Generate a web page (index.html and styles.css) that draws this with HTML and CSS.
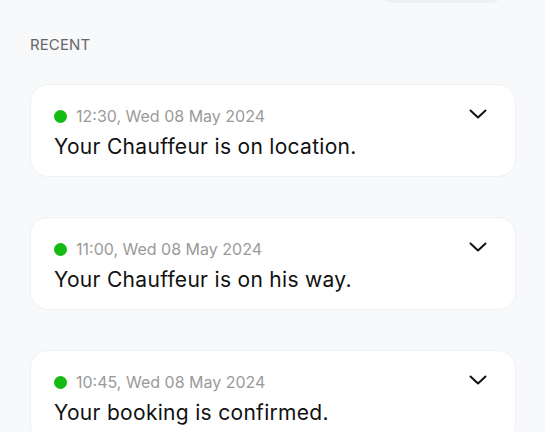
FILE: index.html
```html
<!DOCTYPE html>
<html>
<head>
<meta charset="utf-8">
<link rel="stylesheet" href="styles.css">
</head>
<body>
<div class="topbar"><div class="pill"></div></div>
<main class="panel">
  <h2 class="section-title">RECENT</h2>
  <div class="list">
    <div class="card">
      <div class="card-body">
        <div class="meta"><span class="dot"></span><span class="time">12:30, Wed 08 May 2024</span></div>
        <div class="title">Your Chauffeur is on location.</div>
      </div>
      <svg class="chev" width="18" height="10" viewBox="0 0 18 10"><path d="M1.5 1.5 L9 8.5 L16.5 1.5" fill="none" stroke="#111" stroke-width="2" stroke-linecap="round" stroke-linejoin="round"/></svg>
    </div>
    <div class="card">
      <div class="card-body">
        <div class="meta"><span class="dot"></span><span class="time">11:00, Wed 08 May 2024</span></div>
        <div class="title">Your Chauffeur is on his way.</div>
      </div>
      <svg class="chev" width="18" height="10" viewBox="0 0 18 10"><path d="M1.5 1.5 L9 8.5 L16.5 1.5" fill="none" stroke="#111" stroke-width="2" stroke-linecap="round" stroke-linejoin="round"/></svg>
    </div>
    <div class="card">
      <div class="card-body">
        <div class="meta"><span class="dot"></span><span class="time">10:45, Wed 08 May 2024</span></div>
        <div class="title">Your booking is confirmed.</div>
      </div>
      <svg class="chev" width="18" height="10" viewBox="0 0 18 10"><path d="M1.5 1.5 L9 8.5 L16.5 1.5" fill="none" stroke="#111" stroke-width="2" stroke-linecap="round" stroke-linejoin="round"/></svg>
    </div>
  </div>
</main>
</body>
</html>
```
FILE: styles.css
```css
* { box-sizing: border-box; }
html, body { margin: 0; padding: 0; }
body {
  background: #f8f9fb;
  font-family: Inter, "Open Sans", sans-serif;
  width: 545px;
  height: 432px;
  overflow: hidden;
}
.topbar {
  height: 0;
  position: relative;
}
.pill {
  position: absolute;
  left: 378px;
  top: -30px;
  width: 128px;
  height: 33px;
  border-radius: 16px;
  background: #eef0f3;
}
.panel {
  padding: 35px 29px 0 30px;
}
.section-title {
  margin: 0;
  font-size: 15px;
  font-weight: 400;
  color: #666;
  line-height: 20px;
  letter-spacing: 0.1px;
}
.list {
  margin-top: 29px;
  display: flex;
  flex-direction: column;
  gap: 40px;
}
.card {
  background: #fff;
  border: 1px solid #eff1f3;
  border-radius: 18px;
  height: 93px;
  display: flex;
  justify-content: space-between;
  align-items: flex-start;
  padding: 20px 28px 0 23px;
}
.meta {
  display: flex;
  align-items: center;
  gap: 9px;
  height: 22px;
}
.dot {
  width: 13px;
  height: 13px;
  border-radius: 50%;
  background: #14bb14;
}
.time {
  font-size: 16px;
  color: #9a9a9a;
}
.title {
  margin-top: 6px;
  font-size: 21px;
  color: #111;
  line-height: 28px;
  letter-spacing: 0.3px;
}
.chev {
  margin-top: 4px;
}
```
